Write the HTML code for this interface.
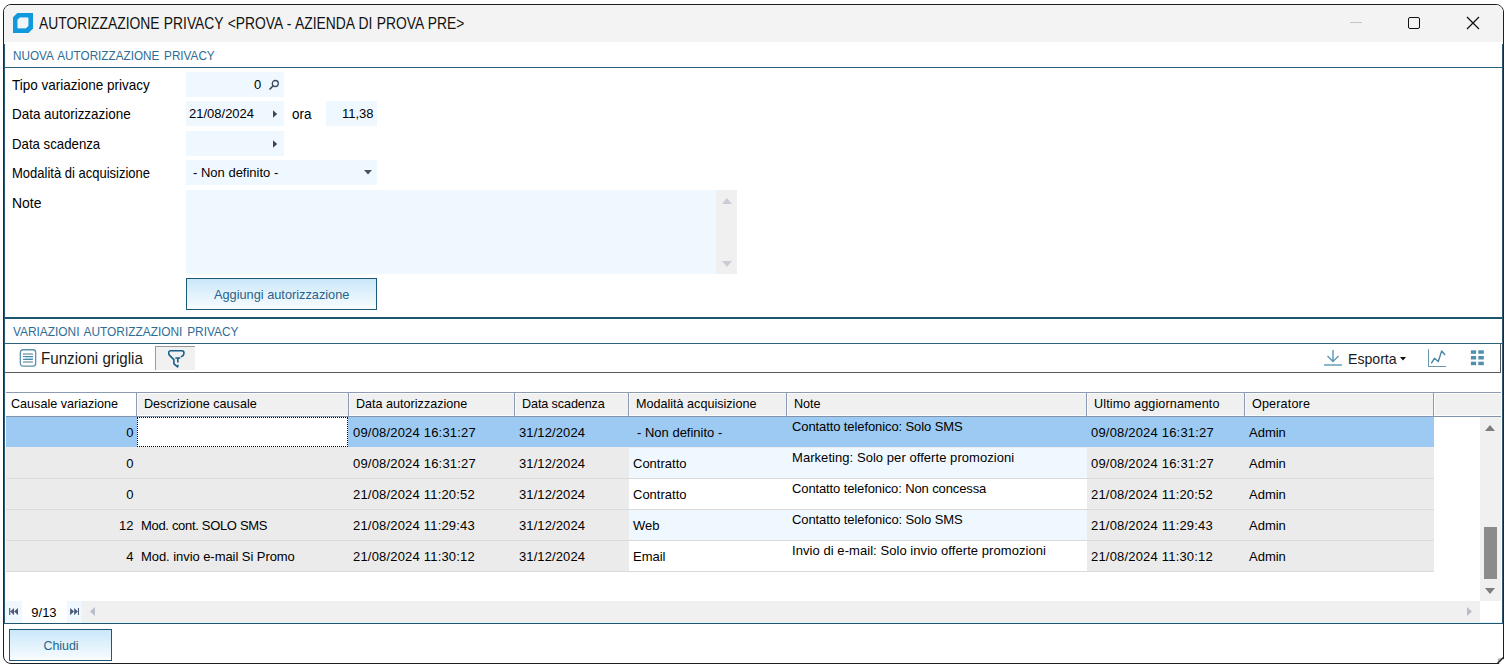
<!DOCTYPE html>
<html lang="it">
<head>
<meta charset="utf-8">
<title>AUTORIZZAZIONE PRIVACY</title>
<style>
*{box-sizing:border-box;margin:0;padding:0}
html,body{width:1506px;height:666px;overflow:hidden;background:#fff}
body{position:relative;font-family:"Liberation Sans",sans-serif;font-size:13px;color:#000}
.a{position:absolute;white-space:nowrap;line-height:1}
#win{position:absolute;left:3px;top:4px;width:1501px;height:660px;border:1px solid #1e1e1e;border-radius:8px 8px 0 8px;background:#fff;overflow:hidden}
#tbar{position:absolute;left:0;top:0;width:100%;height:37px;background:#f3f3f3}
.navy{background:#12303f}
.teal{background:#2b637f}
.inp{position:absolute;background:#f0f8ff}
.lbl{font-size:14.2px;transform-origin:0 0}
.sec{font-size:12.6px;transform-origin:0 0;color:#2e6c96}
.hd{font-size:12.6px;top:398px}
.hsep{position:absolute;top:393px;width:2px;height:23px;background:linear-gradient(90deg,#8a9bb3 0,#8a9bb3 1px,#fbfbfb 1px,#fbfbfb 2px)}
.cell{font-size:13px}
.btn{position:absolute;border:1px solid #1d5a78;background:linear-gradient(#c9e7fa 0%,#dff1fc 45%,#f1f9fe 85%,#f9fcff 100%);color:#1d5a78;font-size:12.7px}
</style>
</head>
<body>
<div id="win">
  <div id="tbar"></div>
</div>
<!-- left/right/bottom inner borders -->
<div class="a" style="left:3px;top:44px;width:1px;height:580px;background:#1c2a33"></div><div class="a" style="left:4px;top:44px;width:1px;height:580px;background:#2a5a76"></div><div class="a" style="left:5px;top:44px;width:1px;height:580px;background:#f0fcff"></div>
<div class="a" style="left:1502px;top:44px;width:1px;height:580px;background:#31596f"></div><div class="a" style="left:1503px;top:44px;width:1px;height:580px;background:#0c2f42"></div>

<!-- title bar content -->
<svg class="a" style="left:13px;top:13px" width="20" height="20" viewBox="0 0 20 20"><path d="M4.3 0H20V15.5L15.5 20H0V4.3Z" fill="#1199dd"/><path d="M6.8 4.8H15.1V12.9L12.9 15.1H4.8V6.8Z" fill="#f1f5f8" stroke="#f1f5f8" stroke-width="0.6" stroke-linejoin="round"/></svg>
<div class="a" id="ttl" style="left:38.6px;top:15.5px;font-size:16px;transform:scaleX(0.865);transform-origin:0 0;word-spacing:0.6px;color:#111">AUTORIZZAZIONE PRIVACY &lt;PROVA - AZIENDA DI PROVA PRE&gt;</div>
<div class="a" style="left:1350px;top:22px;width:12px;height:1px;background:#c4c4c4"></div>
<div class="a" style="left:1408px;top:17px;width:12px;height:12px;border:1.3px solid #111;border-radius:2px"></div>
<svg class="a" style="left:1466px;top:16px" width="14" height="14" viewBox="0 0 14 14"><path d="M1 1L13 13M13 1L1 13" stroke="#111" stroke-width="1.3" fill="none"/></svg>

<!-- section 1 -->
<div class="a sec" style="left:12.7px;top:49.9px;word-spacing:1.6px;transform:scaleX(0.931)">NUOVA AUTORIZZAZIONE PRIVACY</div>
<div class="a teal" style="left:5px;top:67px;width:1497px;height:1px"></div>

<div class="a lbl" style="left:12px;top:77.9px;transform:scaleX(0.953)">Tipo variazione privacy</div>
<div class="a lbl" style="left:12px;top:107.1px;transform:scaleX(0.946)">Data autorizzazione</div>
<div class="a lbl" style="left:12px;top:136.7px;transform:scaleX(0.932)">Data scadenza</div>
<div class="a lbl" style="left:12px;top:165.9px;transform:scaleX(0.916)">Modalità di acquisizione</div>
<div class="a lbl" style="left:12px;top:195.7px;transform:scaleX(0.985)">Note</div>

<div class="inp" style="left:186px;top:72px;width:98px;height:25px"></div>
<div class="inp" style="left:186px;top:101px;width:98px;height:25px"></div>
<div class="inp" style="left:326px;top:101px;width:51px;height:25px"></div>
<div class="inp" style="left:186px;top:131px;width:98px;height:25px"></div>
<div class="inp" style="left:186px;top:160px;width:191px;height:25px"></div>
<div class="inp" style="left:186px;top:190px;width:551px;height:84px"></div>

<div class="a cell" style="left:254px;top:78px">0</div>
<svg class="a" style="left:268px;top:79px" width="12" height="12" viewBox="0 0 12 12"><circle cx="7.3" cy="4.5" r="3" fill="none" stroke="#3c4658" stroke-width="1.3"/><path d="M5.2 6.8L1.5 10.5" stroke="#3c4658" stroke-width="1.6" fill="none"/></svg>
<div class="a cell" style="left:189px;top:107px">21/08/2024</div>
<svg class="a" style="left:273px;top:110px" width="5" height="8" viewBox="0 0 5 8"><path d="M0 0.2L4.2 4L0 7.8Z" fill="#3c4658"/></svg>
<div class="a lbl" style="left:291.5px;top:107.1px;transform:scaleX(0.95)">ora</div>
<div class="a cell" style="left:342px;top:107px">11,38</div>
<svg class="a" style="left:273px;top:140px" width="5" height="8" viewBox="0 0 5 8"><path d="M0 0.2L4.2 4L0 7.8Z" fill="#3c4658"/></svg>
<div class="a cell" style="left:193px;top:166px">- Non definito -</div>
<svg class="a" style="left:363.5px;top:170.3px" width="8" height="4.4" viewBox="0 0 9 5"><path d="M0 0H9L4.5 5Z" fill="#4a5262"/></svg>
<!-- textarea scroll arrows -->
<div class="a" style="left:716px;top:190px;width:21px;height:84px;background:#f0f0f0"></div>
<svg class="a" style="left:722px;top:198px" width="10" height="6" viewBox="0 0 10 6"><path d="M0 6H10L5 0Z" fill="#c9cdd3"/></svg>
<svg class="a" style="left:722px;top:261px" width="10" height="6" viewBox="0 0 10 6"><path d="M0 0H10L5 6Z" fill="#c9cdd3"/></svg>

<div class="btn" style="left:186px;top:278px;width:191px;height:32px"></div>
<div class="a" style="left:214px;top:289px;font-size:12.75px;color:#25638a">Aggiungi autorizzazione</div>

<!-- section 2 -->
<div class="a teal" style="left:5px;top:317px;width:1497px;height:2px;background:#1f566f"></div>
<div class="a sec" style="left:12.7px;top:326.2px;word-spacing:1.5px;transform:scaleX(0.944)">VARIAZIONI AUTORIZZAZIONI PRIVACY</div>
<div class="a teal" style="left:5px;top:343px;width:1497px;height:1px"></div>

<!-- toolbar -->
<div class="a" style="left:5px;top:372px;width:1496px;height:1px;background:#5a5a5a"></div>
<div class="a" style="left:1500px;top:344px;width:1px;height:29px;background:#5a5a5a"></div>
<svg class="a" style="left:19px;top:348px" width="19" height="20" viewBox="0 0 19 20"><rect x="1.35" y="1.75" width="15.3" height="16.4" rx="2.6" fill="#fbfeff" stroke="#5f90ac" stroke-width="1.3"/><rect x="6" y="8.5" width="7.9" height="2.8" fill="#c4e5f7"/><path d="M4 6H13.9M4 14H13.9" stroke="#8aa2b3" stroke-width="1.3"/><path d="M4 8.5H13.9M4 11.3H13.9" stroke="#4a88a8" stroke-width="1.2"/></svg>
<div class="a" style="left:41px;top:351px;font-size:15.7px;transform:scaleX(0.965);transform-origin:0 0;color:#1a1a1a">Funzioni griglia</div>
<div class="a" style="left:155px;top:346px;width:40px;height:24px;background:#f1f1f1;border-top:1px solid #9a9a9a;border-left:1px solid #9a9a9a"></div>
<svg class="a" style="left:168px;top:350px" width="17" height="18" viewBox="0 0 17 18"><path d="M13.4 6.6Q16 5.2 16 3.2Q16 0.8 13.8 0.8H2.7Q0.6 0.8 0.6 3Q0.6 4.6 1.8 5.6L5.9 9.6V13.8L9.6 16.9L10 15.4" fill="none" stroke="#17608c" stroke-width="1.6" stroke-linejoin="round" stroke-linecap="round"/><path d="M7.4 8H12.2M9.8 8V12.6" stroke="#17608c" stroke-width="1.6" fill="none"/></svg>

<svg class="a" style="left:1324px;top:350px" width="18" height="16" viewBox="0 0 18 16"><path d="M9 0V11M3.5 6L9 11.5L14.5 6" fill="none" stroke="#5b97b3" stroke-width="1.4"/><path d="M0 15H18" stroke="#5b97b3" stroke-width="1.4"/></svg>
<div class="a" style="left:1347.5px;top:351.3px;font-size:15px;transform:scaleX(0.94);transform-origin:0 0;color:#1a1a1a">Esporta</div>
<svg class="a" style="left:1400px;top:357px" width="6" height="4" viewBox="0 0 6 4"><path d="M0 0H6L3 3.5Z" fill="#111"/></svg>
<svg class="a" style="left:1428px;top:349px" width="19" height="18" viewBox="0 0 19 18"><path d="M0.5 0.2V17.5H18" fill="none" stroke="#6a97ad" stroke-width="1.1"/><path d="M3.3 14.4L6.4 9.3L10.3 12.5L13.7 1.9L17 6" fill="none" stroke="#4a86a3" stroke-width="1.4" stroke-linejoin="round"/></svg>
<svg class="a" style="left:1470px;top:350px" width="15" height="16" viewBox="0 0 15 16"><g fill="#5090ae"><rect x="0.9" y="0.3" width="5.2" height="3.5"/><rect x="8.3" y="0.3" width="5.5" height="3.5"/><rect x="0.9" y="6" width="5.2" height="3.5"/><rect x="8.3" y="6" width="5.5" height="3.5"/><rect x="0.9" y="11.7" width="5.2" height="3.5"/><rect x="8.3" y="11.7" width="5.5" height="3.5"/></g></svg>

<!-- grid header -->
<div class="a" style="left:6px;top:392px;width:1495px;height:1px;background:#8c9bb0"></div>
<div class="a" style="left:6px;top:393px;width:1495px;height:23px;background:#f0f0f0"></div>
<div class="a" style="left:6px;top:393px;width:1495px;height:1px;background:#fcfcfc"></div>
<div class="a" style="left:6px;top:393px;width:130px;height:23px;background:#fff"></div>
<div class="a" style="left:6px;top:415px;width:1495px;height:1px;background:#fafcff"></div>
<div class="a" style="left:6px;top:416px;width:1495px;height:1px;background:#8193ab"></div>
<div class="hsep" style="left:136px"></div>
<div class="hsep" style="left:348px"></div>
<div class="hsep" style="left:514px"></div>
<div class="hsep" style="left:628px"></div>
<div class="hsep" style="left:786px"></div>
<div class="hsep" style="left:1086px"></div>
<div class="hsep" style="left:1244px"></div>
<div class="hsep" style="left:1433px"></div>
<div class="a hd" style="left:11px">Causale variazione</div>
<div class="a hd" style="left:144px">Descrizione causale</div>
<div class="a hd" style="left:356px">Data autorizzazione</div>
<div class="a hd" style="left:522px;letter-spacing:-0.1px">Data scadenza</div>
<div class="a hd" style="left:636px">Modalità acquisizione</div>
<div class="a hd" style="left:794px">Note</div>
<div class="a hd" style="left:1094px;letter-spacing:0.12px">Ultimo aggiornamento</div>
<div class="a hd" style="left:1252px;letter-spacing:0.15px">Operatore</div>

<!-- grid rows -->
<div class="a" style="left:6px;top:417px;width:1428px;height:30px;background:#9ccaf3;"></div>
<div class="a" style="left:6px;top:447px;width:1428px;height:1px;background:#ebebeb;"></div>
<div class="a" style="left:137px;top:417px;width:211px;height:30px;background:#fff;border:1px dotted #000"></div>
<div class="a cell" style="left:5px;width:128.5px;text-align:right;top:426px">0</div>
<div class="a cell" style="left:353px;top:426px;letter-spacing:0.19px;">09/08/2024 16:31:27</div>
<div class="a cell" style="left:519px;top:426px;letter-spacing:0.1px;">31/12/2024</div>
<div class="a cell" style="left:637px;top:426px;">- Non definito -</div>
<div class="a cell" style="left:792px;top:420px;letter-spacing:-0.1px;">Contatto telefonico: Solo SMS</div>
<div class="a cell" style="left:1091px;top:426px;letter-spacing:0.19px;">09/08/2024 16:31:27</div>
<div class="a cell" style="left:1249px;top:426px;">Admin</div>
<div class="a" style="left:6px;top:448px;width:1428px;height:30px;background:#ebebeb;"></div>
<div class="a" style="left:629px;top:448px;width:458px;height:30px;background:#f0f8ff;"></div>
<div class="a" style="left:6px;top:478px;width:1428px;height:1px;background:#dadada;"></div>
<div class="a cell" style="left:5px;width:128.5px;text-align:right;top:457px">0</div>
<div class="a cell" style="left:353px;top:457px;letter-spacing:0.19px;">09/08/2024 16:31:27</div>
<div class="a cell" style="left:519px;top:457px;letter-spacing:0.1px;">31/12/2024</div>
<div class="a cell" style="left:633px;top:457px;">Contratto</div>
<div class="a cell" style="left:792px;top:451px;letter-spacing:0.055px;">Marketing: Solo per offerte promozioni</div>
<div class="a cell" style="left:1091px;top:457px;letter-spacing:0.19px;">09/08/2024 16:31:27</div>
<div class="a cell" style="left:1249px;top:457px;">Admin</div>
<div class="a" style="left:6px;top:479px;width:1428px;height:30px;background:#ebebeb;"></div>
<div class="a" style="left:629px;top:479px;width:458px;height:30px;background:#fff;"></div>
<div class="a" style="left:6px;top:509px;width:1428px;height:1px;background:#dadada;"></div>
<div class="a cell" style="left:5px;width:128.5px;text-align:right;top:488px">0</div>
<div class="a cell" style="left:353px;top:488px;letter-spacing:0.19px;">21/08/2024 11:20:52</div>
<div class="a cell" style="left:519px;top:488px;letter-spacing:0.1px;">31/12/2024</div>
<div class="a cell" style="left:633px;top:488px;">Contratto</div>
<div class="a cell" style="left:792px;top:482px;letter-spacing:-0.115px;">Contatto telefonico: Non concessa</div>
<div class="a cell" style="left:1091px;top:488px;letter-spacing:0.19px;">21/08/2024 11:20:52</div>
<div class="a cell" style="left:1249px;top:488px;">Admin</div>
<div class="a" style="left:6px;top:510px;width:1428px;height:30px;background:#ebebeb;"></div>
<div class="a" style="left:629px;top:510px;width:458px;height:30px;background:#f0f8ff;"></div>
<div class="a" style="left:6px;top:540px;width:1428px;height:1px;background:#dadada;"></div>
<div class="a cell" style="left:5px;width:128.5px;text-align:right;top:519px">12</div>
<div class="a cell" style="left:141px;top:519px;letter-spacing:-0.32px;">Mod. cont. SOLO SMS</div>
<div class="a cell" style="left:353px;top:519px;letter-spacing:0.19px;">21/08/2024 11:29:43</div>
<div class="a cell" style="left:519px;top:519px;letter-spacing:0.1px;">31/12/2024</div>
<div class="a cell" style="left:633px;top:519px;">Web</div>
<div class="a cell" style="left:792px;top:513px;letter-spacing:-0.1px;">Contatto telefonico: Solo SMS</div>
<div class="a cell" style="left:1091px;top:519px;letter-spacing:0.19px;">21/08/2024 11:29:43</div>
<div class="a cell" style="left:1249px;top:519px;">Admin</div>
<div class="a" style="left:6px;top:541px;width:1428px;height:30px;background:#ebebeb;"></div>
<div class="a" style="left:629px;top:541px;width:458px;height:30px;background:#fff;"></div>
<div class="a" style="left:6px;top:571px;width:1428px;height:1px;background:#dadada;"></div>
<div class="a cell" style="left:5px;width:128.5px;text-align:right;top:550px">4</div>
<div class="a cell" style="left:141px;top:550px;letter-spacing:-0.06px;">Mod. invio e-mail Si Promo</div>
<div class="a cell" style="left:353px;top:550px;letter-spacing:0.19px;">21/08/2024 11:30:12</div>
<div class="a cell" style="left:519px;top:550px;letter-spacing:0.1px;">31/12/2024</div>
<div class="a cell" style="left:633px;top:550px;">Email</div>
<div class="a cell" style="left:792px;top:544px;letter-spacing:0.06px;">Invio di e-mail: Solo invio offerte promozioni</div>
<div class="a cell" style="left:1091px;top:550px;letter-spacing:0.19px;">21/08/2024 11:30:12</div>
<div class="a cell" style="left:1249px;top:550px;">Admin</div>

<!-- vertical scrollbar -->
<div class="a" style="left:1480px;top:417px;width:21px;height:184px;background:#f0f0f0"></div>
<svg class="a" style="left:1485px;top:425px" width="10" height="6" viewBox="0 0 10 6"><path d="M0 6H10L5 0Z" fill="#7d7d7d"/></svg>
<div class="a" style="left:1484px;top:527px;width:13px;height:52px;background:#8b8b8b"></div>
<svg class="a" style="left:1485px;top:588px" width="10" height="6" viewBox="0 0 10 6"><path d="M0 0H10L5 6Z" fill="#7d7d7d"/></svg>

<!-- nav / horizontal scrollbar -->
<div class="a" style="left:5px;top:601px;width:1475px;height:21px;background:#f0f0f0"></div>
<div class="a" style="left:5px;top:622px;width:1497px;height:1px;background:#e6f4fa"></div>
<div class="a" style="left:5px;top:601px;width:77px;height:22px;background:#f0f8ff"></div>
<div class="a" style="left:22px;top:601px;width:45px;height:22px;background:#fff"></div>
<svg class="a" style="left:9px;top:608px" width="9.2" height="7.2" viewBox="0 0 10 8"><path d="M0 0H1.3V8H0ZM5.5 0V8L1.3 4ZM10 0V8L5.6 4Z" fill="#4a5a78"/></svg>
<div class="a" style="left:31.3px;top:606px;font-size:13px">9/13</div>
<svg class="a" style="left:70px;top:608px" width="9.2" height="7.2" viewBox="0 0 10 8"><path d="M10 0H8.7V8H10ZM4.5 0V8L8.7 4ZM0 0V8L4.4 4Z" fill="#4a5a78"/></svg>
<svg class="a" style="left:90px;top:607px" width="5.4" height="9" viewBox="0 0 6 10"><path d="M5.5 0V10L0 5Z" fill="#b9bdc9"/></svg>
<svg class="a" style="left:1467px;top:607px" width="5.4" height="9" viewBox="0 0 6 10"><path d="M0 0V10L5.5 5Z" fill="#b9bdc9"/></svg>
<div class="a" style="left:5px;top:623px;width:1497px;height:1px;background:#1f566f"></div>

<div class="btn" style="left:9px;top:629px;width:103px;height:32px"></div>
<div class="a" style="left:43.5px;top:640px;font-size:12.4px;color:#25638a">Chiudi</div>
<svg class="a" style="left:1496px;top:656px" width="9" height="9" viewBox="0 0 9 9"><path d="M9 1.5V9H1.5Z" fill="#fff"/><path d="M1.8 2.2H5.8L1.8 6.2Z" fill="#b9b9b9"/><path d="M7.6 1.2L1.4 7.6" stroke="#222" stroke-width="1.5" fill="none"/></svg>
</body>
</html>
